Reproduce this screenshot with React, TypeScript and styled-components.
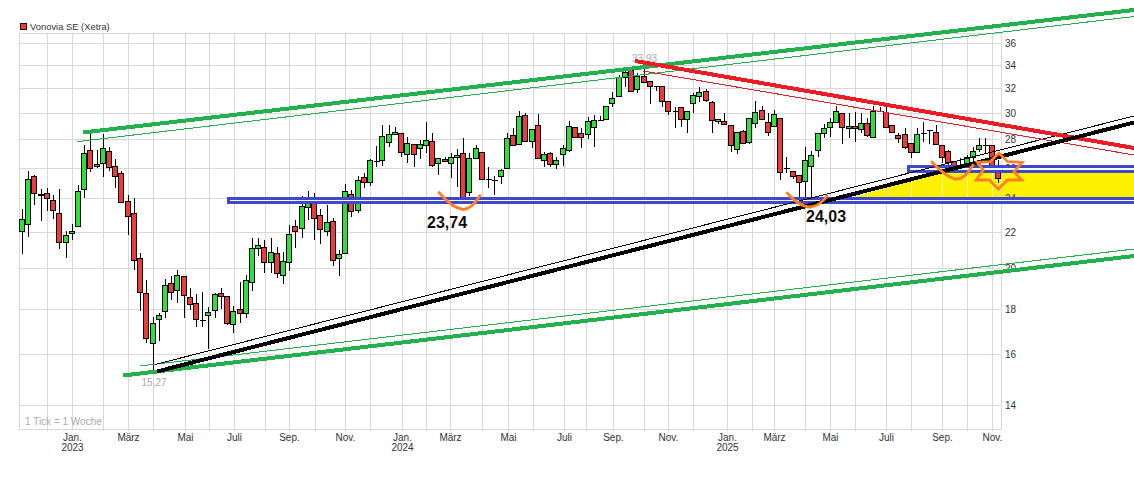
import styled, { createGlobalStyle } from 'styled-components'

const GlobalStyle = createGlobalStyle`
  html, body {
    margin: 0;
    padding: 0;
    background: #fff;
  }
`

const Page = styled.div`
  width: 1134px;
  height: 481px;
  overflow: hidden;
  display: flex;
  flex-direction: column;
  font-family: "Liberation Sans", Arial, sans-serif;
`

const Legend = styled.div`
  height: 33px;
  box-sizing: border-box;
  padding: 19px 0 0 20px;
  display: flex;
  align-items: center;
  align-self: flex-start;
  gap: 3px;
  font-size: 9.4px;
  line-height: 13px;
  color: #333;
`

const LegendSwatch = styled.span`
  width: 5px;
  height: 5px;
  background: #f03a3a;
  border: 1px solid #111;
`

const Chart = styled.svg`
  display: block;
  width: 1134px;
  height: 448px;
  overflow: visible;
`

const AxisText = styled.text<{ $anchor?: string }>`
  font-size: 10px;
  fill: #333;
  text-anchor: ${p => p.$anchor || 'middle'};
`

const NoteText = styled.text<{ $anchor?: string }>`
  font-size: 10px;
  fill: #aaaaaa;
  text-anchor: ${p => p.$anchor || 'middle'};
`

const PriceNote = styled.text`
  font-size: 16px;
  font-weight: 700;
  fill: #111;
`

const GridLine = styled.line`
  stroke: #d8d8d8;
  stroke-width: 1;
  shape-rendering: crispEdges;
`

const FadedGridLine = styled.line`
  stroke: #fbf6b0;
  stroke-width: 1;
  shape-rendering: crispEdges;
`

const Wick = styled.line`
  stroke: #000;
  stroke-width: 1;
  shape-rendering: crispEdges;
`

const Body = styled.rect<{ $up: boolean }>`
  fill: ${p => (p.$up ? '#2fe03a' : '#f03a3a')};
  stroke: #000;
  stroke-width: 1;
  shape-rendering: crispEdges;
`

const TrendLine = styled.line<{ $color: string; $width: number }>`
  stroke: ${p => p.$color};
  stroke-width: ${p => p.$width};
  shape-rendering: crispEdges;
`

const Band = styled.rect`
  fill: #fff;
  stroke: #3f48cc;
  stroke-width: 3;
  shape-rendering: crispEdges;
`

const Sketch = styled.path`
  fill: none;
  stroke: #ff7f27;
  stroke-width: 2.8;
  stroke-linejoin: miter;
  stroke-linecap: round;
`

const GREEN = '#22b14c'
const RED = '#ed1c24'

// y position of the labelled prices
const priceTicks: [string, number][] = [
  ['36', 43], ['34', 65], ['32', 88], ['30', 113], ['28', 139], ['26', 168],
  ['24', 198], ['22', 232], ['20', 268], ['18', 309], ['16', 354], ['14', 405],
]

const minorX = [47, 103, 153, 209, 265, 315, 370, 426, 482, 533, 586, 644, 693, 752, 805, 855, 911, 967]

const months: [string, number, string?][] = [
  ['Jan.', 72, '2023'], ['März', 128], ['Mai', 185], ['Juli', 234], ['Sep.', 289], ['Nov.', 345],
  ['Jan.', 402, '2024'], ['März', 450], ['Mai', 508], ['Juli', 564], ['Sep.', 613], ['Nov.', 668],
  ['Jan.', 727, '2025'], ['März', 774], ['Mai', 830], ['Juli', 886], ['Sep.', 942], ['Nov.', 992],
]

// one candle per week, in picture pixels: g/r, body top, body bottom, high, low
type Candle = [string, number, number, number, number]

const candles: Candle[] = [
  ['g', 219, 231, 209, 254], ['g', 179, 224, 171, 237], ['r', 176, 193, 175, 205], ['r', 194, 195, 189, 221],
  ['r', 193, 198, 188, 211], ['r', 200, 210, 195, 219], ['r', 213, 242, 189, 249], ['g', 235, 242, 231, 258],
  ['g', 231, 233, 224, 240], ['g', 191, 226, 185, 227], ['g', 153, 189, 145, 198], ['r', 150, 168, 132, 172],
  ['g', 164, 166, 150, 168], ['g', 148, 163, 134, 177], ['r', 151, 167, 147, 171], ['r', 166, 176, 159, 188],
  ['r', 173, 202, 171, 202], ['r', 201, 216, 195, 235], ['r', 213, 260, 198, 270], ['r', 258, 292, 253, 311],
  ['r', 293, 338, 280, 343], ['g', 323, 343, 317, 373], ['g', 315, 319, 313, 341], ['g', 285, 311, 279, 318],
  ['r', 283, 292, 276, 300], ['g', 275, 290, 270, 303], ['r', 276, 295, 276, 318], ['r', 297, 304, 288, 310],
  ['r', 303, 319, 294, 327], ['r', 320, 320, 292, 327], ['g', 312, 315, 307, 349], ['g', 294, 310, 293, 318],
  ['r', 293, 296, 288, 309], ['r', 296, 323, 296, 325], ['g', 311, 324, 306, 333], ['r', 309, 313, 282, 323],
  ['g', 280, 313, 275, 318], ['g', 248, 282, 238, 291], ['g', 245, 248, 238, 256], ['r', 247, 262, 240, 273],
  ['g', 252, 262, 238, 273], ['r', 253, 273, 247, 278], ['g', 261, 275, 252, 284], ['g', 234, 262, 225, 271],
  ['r', 226, 231, 220, 248], ['g', 206, 228, 196, 238], ['g', 200, 207, 191, 220], ['r', 200, 218, 193, 240],
  ['r', 215, 229, 209, 244], ['g', 222, 231, 205, 236], ['r', 221, 260, 218, 266], ['g', 254, 258, 250, 276],
  ['g', 191, 253, 184, 254], ['r', 194, 211, 190, 217], ['g', 180, 210, 176, 213], ['r', 177, 182, 173, 188],
  ['g', 160, 182, 159, 186], ['r', 161, 161, 146, 167],
  ['g', 136, 160, 125, 166], ['g', 134, 142, 125, 147], ['g', 132, 134, 127, 134], ['r', 133, 152, 133, 157],
  ['g', 143, 154, 137, 163], ['r', 144, 154, 144, 167], ['g', 144, 148, 140, 159], ['g', 140, 145, 122, 153],
  ['r', 141, 165, 133, 167], ['g', 158, 163, 158, 175], ['r', 159, 161, 157, 162], ['g', 157, 163, 153, 178],
  ['g', 155, 157, 149, 187], ['r', 153, 197, 138, 201], ['g', 158, 192, 153, 196], ['g', 148, 158, 145, 158],
  ['r', 152, 179, 152, 179], ['r', 179, 179, 167, 188], ['r', 180, 180, 176, 195], ['g', 170, 176, 169, 184],
  ['g', 138, 168, 133, 169], ['r', 135, 145, 128, 146], ['g', 116, 144, 111, 145], ['r', 115, 141, 113, 141],
  ['g', 129, 141, 129, 148], ['r', 125, 158, 114, 159], ['g', 154, 160, 152, 167], ['r', 153, 164, 152, 167],
  ['g', 160, 164, 157, 169], ['g', 148, 154, 145, 166], ['g', 126, 150, 121, 152], ['r', 127, 137, 127, 138],
  ['r', 133, 137, 128, 148], ['g', 121, 134, 117, 139], ['g', 120, 127, 115, 147], ['r', 120, 120, 116, 120],
  ['g', 106, 119, 106, 120], ['g', 98, 103, 92, 107], ['g', 77, 96, 75, 97], ['g', 72, 77, 70, 87],
  ['r', 70, 91, 68, 92], ['g', 76, 89, 73, 93], ['r', 76, 82, 64, 82], ['r', 81, 86, 81, 104],
  ['r', 86, 86, 86, 91], ['r', 86, 101, 86, 107], ['r', 101, 111, 101, 115], ['r', 111, 111, 107, 128],
  ['r', 107, 119, 107, 127], ['g', 111, 119, 111, 133], ['g', 95, 103, 93, 113], ['g', 92, 96, 87, 102],
  ['r', 91, 100, 89, 102], ['r', 102, 120, 101, 133], ['g', 119, 121, 119, 124], ['r', 121, 124, 113, 125],
  ['r', 125, 145, 125, 152], ['g', 132, 149, 132, 154], ['r', 131, 143, 130, 144], ['g', 118, 142, 118, 144],
  ['g', 112, 123, 101, 128],
  ['r', 110, 119, 106, 119], ['r', 122, 132, 113, 136], ['g', 114, 126, 110, 126], ['r', 118, 172, 118, 180],
  ['r', 168, 168, 157, 173], ['r', 171, 176, 171, 179], ['r', 175, 182, 175, 198], ['g', 160, 181, 147, 198],
  ['g', 155, 166, 151, 198], ['g', 133, 150, 133, 157], ['g', 128, 133, 124, 138], ['g', 122, 127, 118, 137],
  ['g', 111, 122, 106, 123], ['r', 113, 127, 113, 144], ['g', 126, 128, 113, 138], ['r', 126, 128, 112, 142],
  ['g', 123, 129, 113, 133], ['r', 123, 135, 118, 137], ['g', 111, 137, 106, 138], ['r', 111, 111, 107, 111],
  ['r', 112, 127, 106, 128], ['r', 125, 132, 125, 132], ['r', 135, 138, 133, 143], ['r', 134, 147, 128, 149],
  ['r', 143, 152, 143, 158], ['g', 134, 152, 128, 152], ['r', 133, 133, 122, 142], ['r', 130, 130, 130, 144],
  ['r', 132, 144, 125, 144], ['r', 145, 157, 145, 163], ['r', 151, 162, 150, 165], ['r', 161, 170, 161, 172],
  ['r', 166, 166, 158, 172], ['g', 157, 167, 155, 170], ['g', 151, 157, 147, 165], ['g', 145, 149, 138, 152],
  ['r', 145, 145, 138, 153], ['r', 145, 167, 145, 170], ['r', 168, 178, 160, 183],
]

const Candles = () => (
  <g>
    {candles.map(([kind, top, bottom, high, low], i) => {
      const x = Math.round(22 + i * 6.215) + 0.5
      return (
        <g key={i}>
          <Wick x1={x} x2={x} y1={high} y2={low} />
          {top === bottom ? (
            <Wick x1={x - 3} x2={x + 3} y1={top + 0.5} y2={top + 0.5} />
          ) : (
            <Body $up={kind === 'g'} x={x - 3} y={top + 0.5} width={5} height={bottom - top} />
          )}
        </g>
      )
    })}
  </g>
)

const App = () => (
  <Page>
    <GlobalStyle />
    <Legend>
      <LegendSwatch />
      Vonovia SE (Xetra)
    </Legend>
    <Chart viewBox="0 33 1134 448">
      <polygon points="853,197.5 937,172.5 1134,172.5 1134,197.5" fill="#fff200" />

      <GridLine x1={19.5} x2={19.5} y1={33} y2={430} />
      <GridLine x1={1001.5} x2={1001.5} y1={33} y2={430} />
      <GridLine x1={19} x2={1002} y1={33.5} y2={33.5} />
      <GridLine x1={19} x2={1002} y1={429.5} y2={429.5} />
      {priceTicks.map(([, y]) => (
        <GridLine key={y} x1={19} x2={1002} y1={y + 0.5} y2={y + 0.5} />
      ))}
      {minorX.map(x => (
        <GridLine key={x} x1={x + 0.5} x2={x + 0.5} y1={33} y2={431} />
      ))}
      {months.map(([, x]) => (
        <GridLine key={x} x1={x + 0.5} x2={x + 0.5} y1={33} y2={431} />
      ))}
      {[911, 942, 967, 992].map(x => (
        <FadedGridLine key={x} x1={x + 0.5} x2={x + 0.5} y1={173} y2={197} />
      ))}

      {priceTicks.map(([label, y]) => (
        <AxisText key={label} $anchor="start" x={1005} y={y + 4}>{label}</AxisText>
      ))}
      {months.map(([label, x, year]) => (
        <g key={x}>
          <AxisText x={x + 0.5} y={441}>{label}</AxisText>
          {year && <AxisText x={x + 0.5} y={451}>{year}</AxisText>}
        </g>
      ))}

      <Candles />

      <NoteText x={154} y={386}>15,27</NoteText>
      <NoteText x={644.5} y={62}>33,93</NoteText>
      <NoteText $anchor="start" x={25} y={425}>1 Tick = 1 Woche</NoteText>

      <Band x={228.5} y={198.5} width={930} height={4} />
      <Band x={908.5} y={166.5} width={250} height={5} />

      <TrendLine $color={GREEN} $width={1} x1={77} y1={141.7} x2={1134} y2={16.5} />
      <TrendLine $color={GREEN} $width={4} x1={83} y1={132.5} x2={1134} y2={10} />
      <TrendLine $color={GREEN} $width={1} x1={140} y1={366} x2={1134} y2={249} />
      <TrendLine $color={GREEN} $width={4} x1={123} y1={375.5} x2={1134} y2={256} />
      <TrendLine $color="#000" $width={1} x1={155} y1={364.5} x2={1134} y2={116} />
      <TrendLine $color={RED} $width={1} x1={643} y1={71} x2={1134} y2={155} />
      <TrendLine $color={RED} $width={4} x1={635} y1={61} x2={1134} y2={148} />
      <TrendLine $color="#000" $width={4} x1={157} y1={371.5} x2={1134} y2={122.5} />

      <Sketch d="M439 192.5 Q452 208 463 209.5 Q472 209 480 195.5" />
      <Sketch d="M787 193 Q800 207 810 207 Q820 206 827 196" />
      <Sketch d="M932 162 Q948 179 957 179 Q965 179 973 165" />
      <Sketch d="M999 153.3 L1007.7 161.7 L1022.3 162.3 L1014 171.7 L1021.7 180 L1007.3 180 L998.3 189 L989.3 180 L976 180 L983.3 170 L977.3 162.3 L990 161.7 Z" />

      <PriceNote x={427} y={228}>23,74</PriceNote>
      <PriceNote x={806} y={222}>24,03</PriceNote>
    </Chart>
  </Page>
)

export default App
